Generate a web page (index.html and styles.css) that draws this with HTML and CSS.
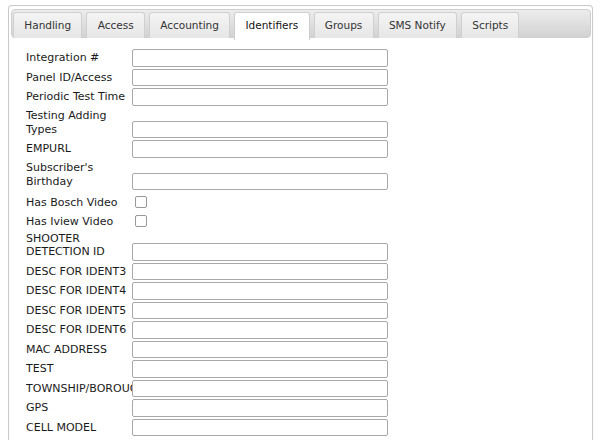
FILE: index.html
```html
<!DOCTYPE html>
<html>
<head>
<meta charset="utf-8">
<link rel="stylesheet" href="styles.css">
</head>
<body>
<div class="panel">
  <ul class="tabs">
    <li class="tab">Handling</li>
    <li class="tab">Access</li>
    <li class="tab">Accounting</li>
    <li class="tab active">Identifiers</li>
    <li class="tab">Groups</li>
    <li class="tab">SMS Notify</li>
    <li class="tab">Scripts</li>
  </ul>
  <div class="content">
    <div class="row"><label class="lbl">Integration #</label><input class="field" type="text"></div>
    <div class="row"><label class="lbl">Panel ID/Access</label><input class="field" type="text"></div>
    <div class="row"><label class="lbl">Periodic Test Time</label><input class="field" type="text"></div>
    <div class="row"><label class="lbl">Testing Adding Types</label><input class="field" type="text"></div>
    <div class="row"><label class="lbl">EMPURL</label><input class="field" type="text"></div>
    <div class="row"><label class="lbl">Subscriber's Birthday</label><input class="field" type="text"></div>
    <div class="row check-row"><label class="lbl">Has Bosch Video</label><input class="check" type="checkbox"></div>
    <div class="row check-row"><label class="lbl">Has Iview Video</label><input class="check" type="checkbox"></div>
    <div class="row"><label class="lbl">SHOOTER DETECTION ID</label><input class="field" type="text"></div>
    <div class="row"><label class="lbl">DESC FOR IDENT3</label><input class="field" type="text"></div>
    <div class="row"><label class="lbl">DESC FOR IDENT4</label><input class="field" type="text"></div>
    <div class="row"><label class="lbl">DESC FOR IDENT5</label><input class="field" type="text"></div>
    <div class="row"><label class="lbl">DESC FOR IDENT6</label><input class="field" type="text"></div>
    <div class="row"><label class="lbl">MAC ADDRESS</label><input class="field" type="text"></div>
    <div class="row"><label class="lbl">TEST</label><input class="field" type="text"></div>
    <div class="row"><label class="lbl">TOWNSHIP/BOROUGH</label><input class="field" type="text"></div>
    <div class="row"><label class="lbl">GPS</label><input class="field" type="text"></div>
    <div class="row"><label class="lbl">CELL MODEL</label><input class="field" type="text"></div>
  </div>
</div>
</body>
</html>
```

FILE: styles.css
```css
html, body {
  margin: 0;
  padding: 0;
  background: #ffffff;
  overflow: hidden;
}

body {
  font-family: "DejaVu Sans", Verdana, sans-serif;
  font-size: 11px;
  color: #222222;
}

.panel {
  margin: 5px 7px 0 8px;
  border: 1px solid #c9c9c9;
  border-bottom: none;
  border-radius: 4px 4px 0 0;
  padding: 3px 1px 0 2px;
  height: 440px;
  box-sizing: border-box;
}

.tabs {
  list-style: none;
  margin: 0;
  padding: 2px 2px 0 1px;
  display: flex;
  gap: 4px;
  border: 1px solid #cfcfcf;
  border-radius: 4px;
  background: linear-gradient(#ececec, #d2d2d2);
  height: 29px;
  box-sizing: border-box;
}

.tab {
  flex: none;
  white-space: nowrap;
  font-size: 10.5px;
  color: #333333;
  border: 1px solid #d0d0d0;
  border-bottom: none;
  border-radius: 3px 3px 0 0;
  background: linear-gradient(#f4f4f4, #e6e6e6);
  padding: 0 10.3px;
  height: 26px;
  line-height: 25px;
  box-sizing: border-box;
}

.tab.active {
  background: #ffffff;
  color: #111111;
  height: 28px;
  border-color: #cfcfcf;
  position: relative;
  z-index: 1;
}

.content {
  padding: 11px 0 0 15px;
  display: flex;
  flex-direction: column;
  gap: 2px;
}

.row {
  display: flex;
  align-items: flex-end;
}

.lbl {
  width: 106px;
  flex: none;
  line-height: 13.5px;
  padding: 1.5px 0 2px;
  overflow: hidden;
  color: #1a1a1a;
}

.check-row .lbl {
  padding: 3.5px 0 0;
}

.field {
  margin: 0;
  width: 256px;
  height: 17.5px;
  box-sizing: border-box;
  border: 1px solid #a9a9a9;
  border-radius: 2px;
  background: #ffffff;
  padding: 0 3px;
  font: inherit;
}

.check {
  appearance: none;
  -webkit-appearance: none;
  margin: 4px 0 0 3px;
  width: 12px;
  height: 12px;
  border: 1px solid #999999;
  border-radius: 2px;
  background: #ffffff;
  align-self: flex-start;
}
```
